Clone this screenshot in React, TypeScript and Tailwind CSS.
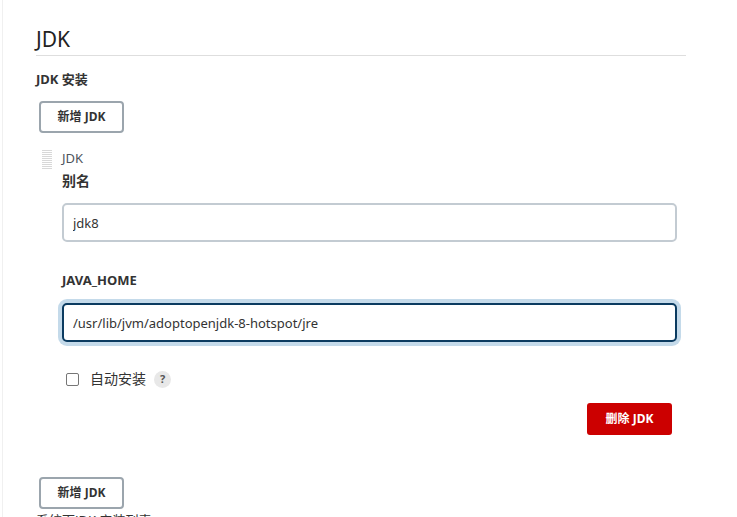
import React from 'react';

const font = { fontFamily: '"Noto Sans", "Noto Sans CJK SC", sans-serif' };

function AddButton() {
  return (
    <button className="ml-[3px] h-[32px] w-[85px] rounded-[4px] border-2 border-[#9ba5ad] bg-white text-[12px] font-bold text-[#333]">
      新增 JDK
    </button>
  );
}

function DragHandle() {
  return (
    <svg width="11" height="20" viewBox="0 0 11 20" className="mt-[1px]">
      {Array.from({ length: 10 }).map((_, r) =>
        Array.from({ length: 5 }).map((_, c) => (
          <rect key={`${r}-${c}`} x={c * 2 + 0.5} y={r * 2} width="1" height="1" fill="#b0b0b0" />
        ))
      )}
    </svg>
  );
}

export default function App() {
  return (
    <div className="h-[517px] w-[737px] overflow-hidden bg-white text-[#333]" style={font}>
      <div className="ml-[2px] h-full border-l border-[#f0f0f0] pl-[33px] pt-[26px]">
        <div className="w-[650px]">
          <h2 className="border-b border-[#dedede] pb-[3px] text-[21px] leading-[26px] text-[#222]">JDK</h2>
          <div className="mt-[13px] text-[13px] font-bold leading-[20px]">JDK 安装</div>
          <div className="mt-[12px]">
            <AddButton />
          </div>

          <div className="mt-[16px] flex gap-[9px] pl-[6px]">
            <DragHandle />
            <div className="flex-1 pr-[9px]">
              <div className="text-[13px] leading-[18px] text-[#4d545d]">JDK</div>
              <div className="mt-[4px] text-[14px] font-bold leading-[20px]">别名</div>
              <input
                readOnly
                value="jdk8"
                className="mt-[12px] h-[39px] w-full rounded-[5px] border-2 border-[#c3cbd2] bg-white px-[9px] text-[13px] text-[#333] outline-none"
                style={font}
              />
              <div className="mt-[28px] text-[13px] font-bold leading-[20px]">JAVA_HOME</div>
              <input
                readOnly
                value="/usr/lib/jvm/adoptopenjdk-8-hotspot/jre"
                className="mt-[13px] h-[39px] w-full rounded-[5px] border-2 border-[#0b3b60] bg-white px-[9px] text-[13px] text-[#333] shadow-[0_0_0_4px_#c4daea] outline-none"
                style={font}
              />
              <div className="mt-[27px] flex items-center pl-[4px]">
                <span className="h-[13px] w-[13px] rounded-[2px] border border-[#767676] bg-white" />
                <span className="ml-[11px] text-[14px] leading-[20px]">自动安装</span>
                <span className="ml-[8px] flex h-[17px] w-[17px] items-center justify-center rounded-full bg-[#e8e8e8] text-[11px] font-bold text-[#555]">
                  ?
                </span>
              </div>
              <div className="mt-[14px] flex justify-end pr-[5px]">
                <button className="h-[32px] w-[85px] rounded-[3px] bg-[#cc0000] text-[12px] font-bold text-white">
                  删除 JDK
                </button>
              </div>
            </div>
          </div>

          <div className="mt-[42px]">
            <AddButton />
          </div>
          <div className="mt-[1px] text-[13px] leading-[20px]">系统下JDK 安装列表</div>
        </div>
      </div>
    </div>
  );
}
